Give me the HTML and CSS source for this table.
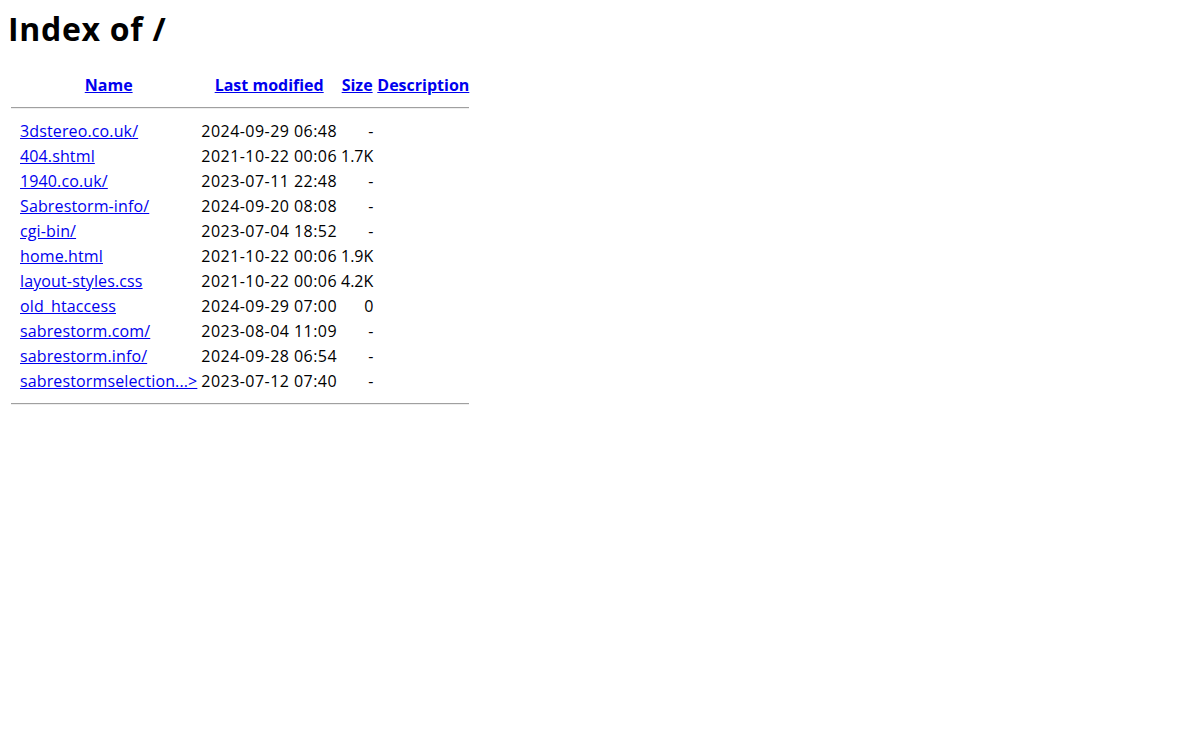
FILE: index.html
```html
<!DOCTYPE html>
<html>
<head>
<meta charset="utf-8">
<title>Index of /</title>
<link rel="stylesheet" href="styles.css">
</head>
<body>
<h1 class="title">Index of /</h1>
<table class="listing">
<tr><th class="ico">&nbsp;</th><th><a href="#">Name</a></th><th><a href="#">Last modified</a></th><th><a href="#">Size</a></th><th><a href="#">Description</a></th></tr>
<tr><th colspan="5" class="rule"><hr></th></tr>
<tr><td class="ico">&nbsp;</td><td class="n"><a href="#">3dstereo.co.uk/</a></td><td class="d">2024-09-29 06:48</td><td class="r">-</td><td>&nbsp;</td></tr>
<tr><td class="ico">&nbsp;</td><td class="n"><a href="#">404.shtml</a></td><td class="d">2021-10-22 00:06</td><td class="r">1.7K</td><td>&nbsp;</td></tr>
<tr><td class="ico">&nbsp;</td><td class="n"><a href="#">1940.co.uk/</a></td><td class="d">2023-07-11 22:48</td><td class="r">-</td><td>&nbsp;</td></tr>
<tr><td class="ico">&nbsp;</td><td class="n"><a href="#">Sabrestorm-info/</a></td><td class="d">2024-09-20 08:08</td><td class="r">-</td><td>&nbsp;</td></tr>
<tr><td class="ico">&nbsp;</td><td class="n"><a href="#">cgi-bin/</a></td><td class="d">2023-07-04 18:52</td><td class="r">-</td><td>&nbsp;</td></tr>
<tr><td class="ico">&nbsp;</td><td class="n"><a href="#">home.html</a></td><td class="d">2021-10-22 00:06</td><td class="r">1.9K</td><td>&nbsp;</td></tr>
<tr><td class="ico">&nbsp;</td><td class="n"><a href="#">layout-styles.css</a></td><td class="d">2021-10-22 00:06</td><td class="r">4.2K</td><td>&nbsp;</td></tr>
<tr><td class="ico">&nbsp;</td><td class="n"><a href="#">old_htaccess</a></td><td class="d">2024-09-29 07:00</td><td class="r">0</td><td>&nbsp;</td></tr>
<tr><td class="ico">&nbsp;</td><td class="n"><a href="#">sabrestorm.com/</a></td><td class="d">2023-08-04 11:09</td><td class="r">-</td><td>&nbsp;</td></tr>
<tr><td class="ico">&nbsp;</td><td class="n"><a href="#">sabrestorm.info/</a></td><td class="d">2024-09-28 06:54</td><td class="r">-</td><td>&nbsp;</td></tr>
<tr><td class="ico">&nbsp;</td><td class="n"><a href="#">sabrestormselection...&gt;</a></td><td class="d">2023-07-12 07:40</td><td class="r">-</td><td>&nbsp;</td></tr>
<tr><th colspan="5" class="rule"><hr></th></tr>
</table>
</body>
</html>
```
FILE: styles.css
```css
body {
  margin: 8px;
  font-family: "Open Sans", "Noto Sans", sans-serif;
  font-size: 16px;
  color: #000;
  background: #fff;
}
.title {
  margin: 0 0 22px 0;
  font-size: 32px;
  line-height: 41px;
  font-weight: bold;
  letter-spacing: 0.7px;
}
.listing {
  border-spacing: 2px;
}
.listing td, .listing th {
  padding: 2px 1px 0 1px;
  line-height: 21px;
  white-space: nowrap;
}
.listing .rule {
  padding: 1px;
}
.listing .ico {
  width: 5px;
}
.listing a {
  color: #0000ee;
}
.listing .n a {
  letter-spacing: 0.13px;
}
.listing .d {
  text-align: right;
  letter-spacing: 0.45px;
}
.listing .r {
  text-align: right;
}
.rule hr {
  margin: 8px 0 7px 0;
  height: 0;
  border: 0;
  border-top: 1px solid #a0a0a0;
  border-bottom: 1px solid #eeeeee;
}
```
